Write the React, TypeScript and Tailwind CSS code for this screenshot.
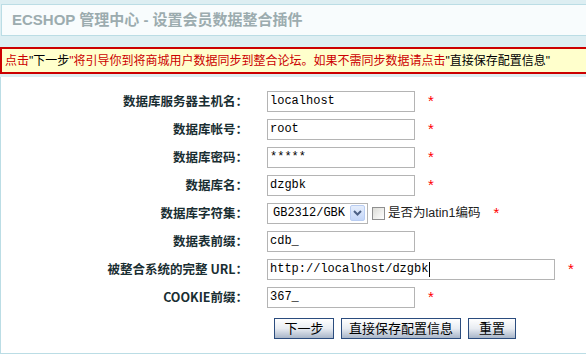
import React from 'react';

const cjk = { fontFamily: '"Liberation Sans", "Noto Sans CJK SC", sans-serif' };
const label = { fontFamily: '"Noto Sans CJK SC", "Liberation Sans", sans-serif' };
const mono = { fontFamily: '"Liberation Mono", "Noto Sans CJK SC", monospace' };

const Star = () => <span className="text-[#ff0000] text-[15px] leading-none">*</span>;

const TextField = ({ value, wide }: { value: string; wide?: boolean }) => (
  <div
    className={`${wide ? 'w-[288px]' : 'w-[148px]'} h-[21px] border border-[#b4b4b4] bg-white flex items-center pl-[2px] text-[12px] text-black`}
    style={mono}
  >
    {value}
    {wide && <span className="w-px h-[15px] bg-black ml-px" />}
  </div>
);

const Row = ({ name, children }: { name: string; children: React.ReactNode }) => (
  <div className="flex items-center h-[28px]">
    <div className="w-[247px] text-right font-bold text-[12.5px] text-[#192e32]" style={label}>
      {name}
    </div>
    <div className="ml-[19px] flex items-center">{children}</div>
  </div>
);

const Btn = ({ name, w }: { name: string; w: string }) => (
  <button
    className={`${w} h-[21px] border border-[#2b4c7e] bg-gradient-to-b from-white via-[#e8ecf2] to-[#a9b6c9] text-[13px] text-black leading-none`}
    style={cjk}
  >
    {name}
  </button>
);

export default function App() {
  return (
    <div className="w-[586px] h-[354px] bg-[#ddeef2] pt-[4px] overflow-hidden flex flex-col" style={cjk}>
      {/* Title */}
      <div className="ml-px h-[32px] border border-r-0 border-[#bbdde5] bg-[#f8fcfd] flex items-center pl-[10px]">
        <h1 className="text-[15px] font-bold text-[#9cacaf]" style={cjk}>
          ECSHOP 管理中心 - 设置会员数据整合插件
        </h1>
      </div>

      {/* Warning */}
      <div className="mt-[11px] h-[27px] border-2 border-r-0 border-[#cc0000] bg-[#ffffcc] flex items-center pl-[3px] text-[12px] whitespace-nowrap">
        <span className="text-[#cc0000]">点击</span>
        <span className="text-black">"下一步</span>
        <span className="text-[#cc0000]">"将引导你到将商城用户数据同步到整合论坛。如果不需同步数据请点击</span>
        <span className="text-black">"直接保存配置信息"</span>
      </div>

      {/* Form */}
      <div className="mt-[3px] flex-1 bg-white border-l border-b border-[#bbdde5] pt-[10px]">
        <Row name="数据库服务器主机名：">
          <TextField value="localhost" />
          <span className="ml-[13px]"><Star /></span>
        </Row>
        <Row name="数据库帐号：">
          <TextField value="root" />
          <span className="ml-[13px]"><Star /></span>
        </Row>
        <Row name="数据库密码：">
          <TextField value="*****" />
          <span className="ml-[13px]"><Star /></span>
        </Row>
        <Row name="数据库名：">
          <TextField value="dzgbk" />
          <span className="ml-[13px]"><Star /></span>
        </Row>
        <Row name="数据库字符集：">
          <div className="w-[101px] h-[21px] border border-[#b4b4b4] bg-white flex items-center justify-between pl-[5px] pr-[2px]">
            <span className="text-[12px] text-black" style={mono}>GB2312/GBK</span>
            <span className="w-[15px] h-[16px] rounded-[2px] border border-[#b9cdf2] bg-gradient-to-b from-[#e6eefc] to-[#c4d6f8] flex items-center justify-center">
              <svg width="9" height="6" viewBox="0 0 9 6">
                <path d="M1 1 L4.5 4.5 L8 1" stroke="#4d6185" strokeWidth="2" fill="none" />
              </svg>
            </span>
          </div>
          <span className="ml-[4px] w-[13px] h-[13px] border border-[#8f8f8f] bg-gradient-to-br from-[#dcdcd7] to-white" />
          <span className="ml-[3px] text-[12.5px] text-[#222]">是否为latin1编码</span>
          <span className="ml-[13px]"><Star /></span>
        </Row>
        <Row name="数据表前缀：">
          <TextField value="cdb_" />
        </Row>
        <Row name="被整合系统的完整 URL：">
          <TextField value="http://localhost/dzgbk" wide />
          <span className="ml-[13px]"><Star /></span>
        </Row>
        <Row name="COOKIE前缀：">
          <TextField value="367_" />
          <span className="ml-[13px]"><Star /></span>
        </Row>
        <div className="flex items-center h-[28px] pl-[273px] pt-[6px] gap-[7px]">
          <Btn name="下一步" w="w-[60px]" />
          <Btn name="直接保存配置信息" w="w-[120px]" />
          <Btn name="重置" w="w-[48px]" />
        </div>
      </div>
    </div>
  );
}
